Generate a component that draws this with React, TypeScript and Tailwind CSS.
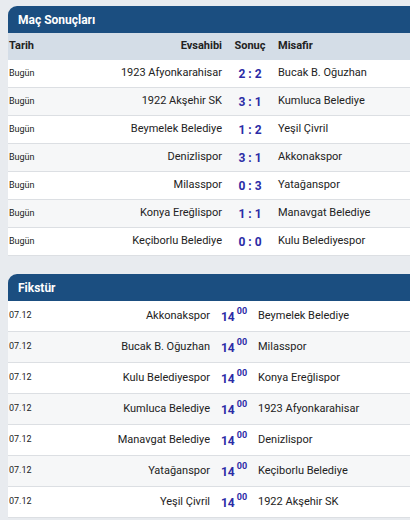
import React from "react";

const results = [
  ["Bugün", "1923 Afyonkarahisar", "2 : 2", "Bucak B. Oğuzhan"],
  ["Bugün", "1922 Akşehir SK", "3 : 1", "Kumluca Belediye"],
  ["Bugün", "Beymelek Belediye", "1 : 2", "Yeşil Çivril"],
  ["Bugün", "Denizlispor", "3 : 1", "Akkonakspor"],
  ["Bugün", "Milasspor", "0 : 3", "Yatağanspor"],
  ["Bugün", "Konya Ereğlispor", "1 : 1", "Manavgat Belediye"],
  ["Bugün", "Keçiborlu Belediye", "0 : 0", "Kulu Belediyespor"],
];

const fixtures = [
  ["07.12", "Akkonakspor", "Beymelek Belediye"],
  ["07.12", "Bucak B. Oğuzhan", "Milasspor"],
  ["07.12", "Kulu Belediyespor", "Konya Ereğlispor"],
  ["07.12", "Kumluca Belediye", "1923 Afyonkarahisar"],
  ["07.12", "Manavgat Belediye", "Denizlispor"],
  ["07.12", "Yatağanspor", "Keçiborlu Belediye"],
  ["07.12", "Yeşil Çivril", "1922 Akşehir SK"],
];

function Header({ title }: { title: string }) {
  return (
    <div className="h-[27px] bg-[#1b4e80] rounded-tl-[9px] flex items-center pl-[10px]">
      <span className="text-white font-bold text-[12px]">{title}</span>
    </div>
  );
}

export default function App() {
  return (
    <div
      className="w-[410px] h-[520px] overflow-hidden bg-[#e8ebef] pl-2 pt-[6px] text-[#222]"
      style={{ fontFamily: "Roboto, 'Liberation Sans', sans-serif" }}
    >
      <div className="w-[420px]">
        <Header title="Maç Sonuçları" />
        <div className="h-[27px] bg-[#d4dde7] flex items-center text-[11px] font-bold">
          <div className="w-[80px] pl-[1px]">Tarih</div>
          <div className="w-[134px] text-right">Evsahibi</div>
          <div className="w-[56px] text-center">Sonuç</div>
          <div className="flex-1">Misafir</div>
        </div>
        {results.map(([d, h, s, a], i) => (
          <div
            key={i}
            className={`h-[28px] flex items-center border-b border-[#dcdfe3] ${
              i % 2 === 0 ? "bg-white" : "bg-[#f6f7f8]"
            }`}
          >
            <div className="w-[80px] pl-[1px] text-[9px]">{d}</div>
            <div className="w-[134px] text-right text-[11px]">{h}</div>
            <div className="w-[56px] text-center text-[12px] font-bold text-[#2b2ba6]">{s}</div>
            <div className="flex-1 text-[11px]">{a}</div>
          </div>
        ))}
      </div>

      <div className="w-[420px] mt-[18px]">
        <Header title="Fikstür" />
        {fixtures.map(([d, h, a], i) => (
          <div
            key={i}
            className={`h-[31px] flex items-center border-b border-[#dcdfe3] ${
              i % 2 === 0 ? "bg-white" : "bg-[#f6f7f8]"
            }`}
          >
            <div className="w-[80px] pl-[1px] text-[9px]">{d}</div>
            <div className="w-[122px] text-right text-[11px]">{h}</div>
            <div className="w-[48px] flex justify-center items-start text-[#2b2ba6] font-bold">
              <span className="text-[12px] leading-[14px] mt-[2px]">14</span>
              <span className="text-[9px] leading-[10px] ml-[2px] -mt-[2px]">00</span>
            </div>
            <div className="flex-1 text-[11px]">{a}</div>
          </div>
        ))}
      </div>
    </div>
  );
}
